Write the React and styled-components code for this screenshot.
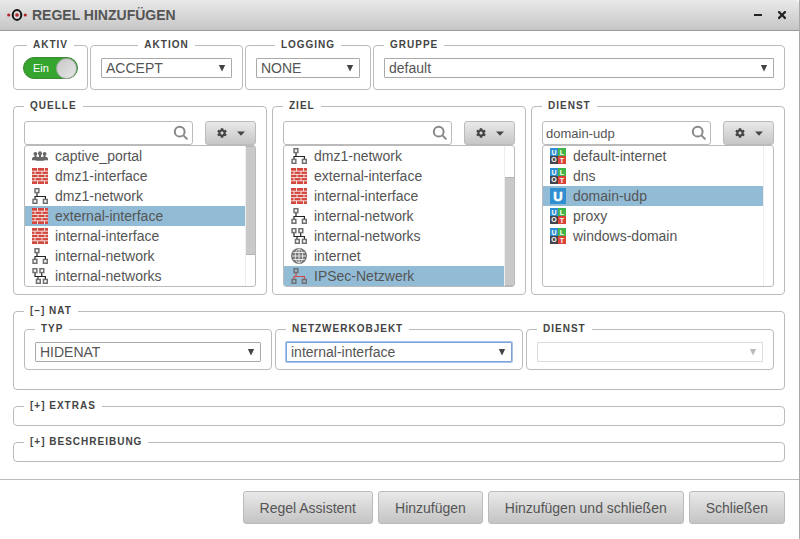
import React, { useState } from "react";
import styled, { createGlobalStyle, css } from "styled-components";
import { FaCog, FaTimes } from "react-icons/fa";

// Data of the three object lists
const sources = [
  { name: "captive_portal", icon: "users" },
  { name: "dmz1-interface", icon: "wall" },
  { name: "dmz1-network", icon: "network" },
  { name: "external-interface", icon: "wall" },
  { name: "internal-interface", icon: "wall" },
  { name: "internal-network", icon: "network" },
  { name: "internal-networks", icon: "networks" },
];

const targets = [
  { name: "dmz1-network", icon: "network" },
  { name: "external-interface", icon: "wall" },
  { name: "internal-interface", icon: "wall" },
  { name: "internal-network", icon: "network" },
  { name: "internal-networks", icon: "networks" },
  { name: "internet", icon: "globe" },
  { name: "IPSec-Netzwerk", icon: "vpn" },
];

const services = [
  { name: "default-internet", icon: "group" },
  { name: "dns", icon: "group" },
  { name: "domain-udp", icon: "udp" },
  { name: "proxy", icon: "group" },
  { name: "windows-domain", icon: "group" },
];

export default function App() {
  return (
    <>
      <GlobalStyle />
      <Window>
        <Header>
          <Logo />
          <Title>REGEL HINZUFÜGEN</Title>
          <WindowButton aria-label="Minimieren">
            <Dash />
          </WindowButton>
          <WindowButton aria-label="Fenster schließen">
            <FaTimes size={12} />
          </WindowButton>
        </Header>

        <Body>
          <SettingsRow>
            <Fieldset $pad="6px 9px">
              <Legend $center>AKTIV</Legend>
              <Switch>
                <input type="checkbox" defaultChecked aria-label="Aktiv" />
                <span>Ein</span>
                <Knob />
              </Switch>
            </Fieldset>
            <Fieldset>
              <Legend $center>AKTION</Legend>
              <Select label="Aktion" value="ACCEPT" />
            </Fieldset>
            <Fieldset>
              <Legend $center>LOGGING</Legend>
              <Select label="Logging" value="NONE" />
            </Fieldset>
            <Fieldset>
              <Legend>GRUPPE</Legend>
              <Select label="Gruppe" value="default" />
            </Fieldset>
          </SettingsRow>

          <Columns $gap={5}>
            <ObjectPicker
              title="QUELLE"
              items={sources}
              initial="external-interface"
              thumb="start"
            />
            <ObjectPicker
              title="ZIEL"
              items={targets}
              initial="IPSec-Netzwerk"
              thumb="end"
            />
            <ObjectPicker
              title="DIENST"
              items={services}
              initial="domain-udp"
              query="domain-udp"
            />
          </Columns>

          <Fieldset $pad="6px 10px 19px">
            <Legend>
              <LegendButton>[–] NAT</LegendButton>
            </Legend>
            <Columns $gap={3}>
              <Fieldset $pad="7px 10px">
                <Legend>TYP</Legend>
                <Select label="Typ" value="HIDENAT" />
              </Fieldset>
              <Fieldset $pad="7px 10px">
                <Legend>NETZWERKOBJEKT</Legend>
                <Select
                  label="Netzwerkobjekt"
                  value="internal-interface"
                  active
                />
              </Fieldset>
              <Fieldset $pad="7px 10px">
                <Legend>DIENST</Legend>
                <Select label="NAT Dienst" value="" disabled />
              </Fieldset>
            </Columns>
          </Fieldset>

          <Fieldset $pad="13px 10px 0">
            <Legend>
              <LegendButton>[+] EXTRAS</LegendButton>
            </Legend>
          </Fieldset>

          <Fieldset $pad="13px 10px 0">
            <Legend>
              <LegendButton>[+] BESCHREIBUNG</LegendButton>
            </Legend>
          </Fieldset>
        </Body>

        <Footer>
          <Button>Regel Assistent</Button>
          <Button>Hinzufügen</Button>
          <Button>Hinzufügen und schließen</Button>
          <Button>Schließen</Button>
        </Footer>
      </Window>
    </>
  );
}

// Drop-down with its own arrow
function Select({ label, value, active, disabled }) {
  return (
    <SelectBox $disabled={disabled}>
      <SelectField
        aria-label={label}
        defaultValue={value}
        disabled={disabled}
        $active={active}
      >
        <option value={value}>{value}</option>
      </SelectField>
      <svg width="8" height="8" viewBox="0 0 8 8">
        <path d="M0.8 1h6.4L4 7.5z" fill="currentColor" />
      </svg>
    </SelectBox>
  );
}

// Search box, settings button and list of objects
function ObjectPicker({ title, items, initial, query = "", thumb }) {
  const [selected, setSelected] = useState(initial);

  return (
    <Fieldset $pad="9px 10px 7px">
      <Legend>{title}</Legend>
      <Tools>
        <SearchBox>
          <input type="text" aria-label={title} defaultValue={query} />
          <svg width="16" height="16" viewBox="0 0 16 16">
            <circle cx="6.7" cy="6.7" r="4.9" />
            <path d="M10.4 10.4l4 4" />
          </svg>
        </SearchBox>
        <GearButton aria-label="Optionen">
          <FaCog size={10} />
          <svg width="8" height="5" viewBox="0 0 8 5">
            <path d="M0 0.5h8L4 4.7z" fill="currentColor" />
          </svg>
        </GearButton>
      </Tools>
      <ListBox>
        <List role="listbox" aria-label={title}>
          {items.map(({ name, icon }) => (
            <Item
              key={name}
              role="option"
              aria-selected={name === selected}
              $selected={name === selected}
              onClick={() => setSelected(name)}
            >
              <ItemIcon type={icon} />
              {name}
            </Item>
          ))}
        </List>
        <Track $thumb={thumb}>{thumb && <Thumb />}</Track>
      </ListBox>
    </Fieldset>
  );
}

function Logo() {
  return (
    <svg width="20" height="16" viewBox="0 0 20 16">
      <circle cx="1.7" cy="8" r="1.6" fill="#b3242a" />
      <circle cx="18.3" cy="8" r="1.6" fill="#b3242a" />
      <ellipse
        cx="10"
        cy="8"
        rx="4.3"
        ry="4.9"
        fill="none"
        stroke="#111"
        strokeWidth="2"
      />
      <circle cx="10" cy="8" r="1.8" fill="#b3242a" />
    </svg>
  );
}

// Small square node of the network icons
function Node({ x, y }) {
  return (
    <rect
      x={x + 0.75}
      y={y + 0.75}
      width="3.8"
      height="3.8"
      fill="none"
      stroke="#707070"
      strokeWidth="1.5"
    />
  );
}

function ItemIcon({ type }) {
  return (
    <svg width="16" height="16" viewBox="0 0 16 16" aria-hidden="true">
      {icons[type]}
    </svg>
  );
}

const network = (color) => (
  <>
    <path
      d="M5 5v3.5M3 11V8.5h10.4V11"
      fill="none"
      stroke={color}
      strokeWidth="1.2"
    />
    <Node x={2.3} y={0} />
    <Node x={0.3} y={10.7} />
    <Node x={10.7} y={10.7} />
  </>
);

const icons = {
  users: (
    <g fill="#666">
      <circle cx="3.4" cy="5.8" r="1.9" />
      <circle cx="12.6" cy="5.8" r="1.9" />
      <path d="M2.6 7h1.6v1.3l1.5.7v3.2H0v-1.500C0 9.500.9 9 2.600 8.400z" />
      <path d="M13.400 7h-1.600v1.300l-1.500.7v3.200H16v-1.500c0-1.200-.9-1.700-2.600-2.300z" />
      <ellipse cx="8" cy="5.6" rx="1.9" ry="2.4" />
      <path d="M7 7h2v1.700c1.900.6 2.900 1.200 2.900 2.500v1.500H4.100v-1.500c0-1.300 1-1.900 2.900-2.500z" />
    </g>
  ),
  wall: (
    <>
      <rect width="16" height="16" fill="#d0483e" />
      <path
        d="M0 3.2h16M0 6.4h16M0 9.6h16M0 12.8h16M5.5 0v3.2M12.5 0v3.2M3 3.2v3.2M10 3.2v3.2M6 6.4v3.2M13 6.4v3.2M3 9.6v3.2M10 9.6v3.2M5.5 12.8V16M12.5 12.8V16"
        stroke="#fff"
        strokeWidth="0.8"
      />
    </>
  ),
  network: network("#222"),
  vpn: network("#cf4a4a"),
  networks: (
    <>
      <path
        d="M3 5v3.5h10.4V11M9.7 5v3.5M6 8.5V11"
        fill="none"
        stroke="#222"
        strokeWidth="1.2"
      />
      <Node x={0.3} y={0} />
      <Node x={7.2} y={0} />
      <Node x={3.7} y={10.7} />
      <Node x={10.7} y={10.7} />
    </>
  ),
  globe: (
    <>
      <circle cx="8" cy="8" r="8" fill="#777" />
      <g fill="none" stroke="#eee" strokeWidth="0.9">
        <path d="M8 1v14M1 8h14M2.2 4.5h11.6M2.2 11.5h11.6" />
        <ellipse cx="8" cy="8" rx="3.8" ry="6.9" />
      </g>
    </>
  ),
  group: (
    <>
      <rect width="8" height="8" fill="#2f8fd0" />
      <rect x="8" width="8" height="8" fill="#3fb549" />
      <rect y="8" width="8" height="8" fill="#44444a" />
      <rect x="8" y="8" width="8" height="8" fill="#dd4237" />
      <g
        fill="#fff"
        fontFamily="Liberation Sans, sans-serif"
        fontSize="7"
        fontWeight="bold"
        textAnchor="middle"
      >
        <text x="4" y="6.5">U</text>
        <text x="12" y="6.5">L</text>
        <text x="4" y="14.2">O</text>
        <text x="12" y="14.5">T</text>
      </g>
    </>
  ),
  udp: (
    <>
      <rect width="16" height="16" fill="#2f8fd0" />
      <text
        x="8"
        y="12.6"
        fill="#fff"
        stroke="#fff"
        strokeWidth="0.5"
        fontFamily="Liberation Sans, sans-serif"
        fontSize="13"
        fontWeight="bold"
        textAnchor="middle"
      >
        U
      </text>
    </>
  ),
};

const GlobalStyle = createGlobalStyle`
  * {
    box-sizing: border-box;
  }

  body {
    margin: 0;
    background: #fff;
    color: #555;
    font-family: "Liberation Sans", Arial, sans-serif;
    font-size: 14px;
  }

  button, input, select {
    margin: 0;
    color: inherit;
    font: inherit;
  }
`;

const Window = styled.div`
  min-height: 100vh;
  border-right: 1px solid #aaa;
`;

// ======================================
// Title bar
const Header = styled.header`
  display: flex;
  align-items: center;
  height: 31px;
  padding: 0 11px 0 7px;
  background: linear-gradient(#e9e9e9, #c6c6c6);
  border-bottom: 1px solid #999;
  border-top-right-radius: 4px;
`;

const Title = styled.h1`
  flex: 1;
  margin: 0 0 0 5px;
  font-size: 14px;
  line-height: 16px;
`;

const WindowButton = styled.button`
  display: grid;
  place-items: center;
  width: 12px;
  height: 16px;
  margin-left: 12px;
  padding: 0;
  border: 0;
  background: none;
  color: #222;
`;

const Dash = styled.span`
  width: 8px;
  height: 2px;
  background: #222;
`;

// ======================================
// Groups of the form
const Body = styled.main`
  display: flex;
  flex-direction: column;
  gap: 10px;
  padding: 8px 14px 17px 13px;
`;

const SettingsRow = styled.div`
  display: grid;
  grid-template-columns: 75px 153px 126px 1fr;
  gap: 2px;
`;

const Columns = styled.div`
  display: grid;
  grid-template-columns: repeat(3, 1fr);
  gap: ${({ $gap }) => $gap}px;
`;

const Fieldset = styled.fieldset`
  min-width: 0;
  margin: 0;
  padding: ${({ $pad }) => $pad || "7px 10px 11px"};
  border: 1px solid #bbb;
  border-radius: 4px;
`;

const Legend = styled.legend`
  padding: 0 6px;
  color: #444;
  font-size: 10px;
  font-weight: bold;
  line-height: 12px;
  letter-spacing: 1px;

  ${({ $center }) =>
    $center &&
    css`
      margin: 0 auto;
    `}
`;

const LegendButton = styled.button`
  display: block;
  padding: 0;
  border: 0;
  background: none;
  letter-spacing: inherit;
`;

// ======================================
// Controls
const Switch = styled.label`
  display: flex;
  align-items: center;
  justify-content: space-between;
  height: 22px;
  padding-left: 9px;
  border: 1px solid #3c8a35;
  border-radius: 11px;
  background: #35a52f;
  color: #fff;
  font-size: 11px;

  input {
    position: absolute;
    opacity: 0;
  }
`;

const Knob = styled.i`
  width: 21px;
  height: 21px;
  border: 1px solid #aaa;
  border-radius: 50%;
  background: linear-gradient(135deg, #c8c8c8, #e6e6e6);
`;

const SelectBox = styled.div`
  display: grid;
  align-items: center;
  color: ${({ $disabled }) => ($disabled ? "#bbb" : "#444")};

  & > * {
    grid-area: 1 / 1;
  }

  & > svg {
    justify-self: end;
    margin-right: 6px;
    pointer-events: none;
  }
`;

const SelectField = styled.select`
  appearance: none;
  width: 100%;
  height: 20px;
  padding: 0 20px 0 4px;
  border: 1px solid #aaa;
  border-radius: 1px;
  background: #fff;
  color: #555;
  outline: none;

  &:disabled {
    border-color: #ddd;
    opacity: 1;
  }

  ${({ $active }) =>
    $active &&
    css`
      border-color: #7ba3d8;
      box-shadow: 0 0 0 1px #a9c4e6;
    `}
`;

const Tools = styled.div`
  display: flex;
  gap: 12px;
`;

const SearchBox = styled.div`
  flex: 1;
  display: flex;
  align-items: center;
  min-width: 0;
  height: 24px;
  padding: 0 3px;
  border: 1px solid #bbb;
  border-radius: 3px;

  input {
    flex: 1;
    min-width: 0;
    padding: 0;
    border: 0;
    background: none;
    font-size: 13px;
    outline: none;
  }

  svg {
    fill: none;
    stroke: #888;
    stroke-width: 2;
  }
`;

const GearButton = styled.button`
  display: flex;
  align-items: center;
  justify-content: center;
  gap: 10px;
  width: 51px;
  height: 24px;
  padding: 0;
  border: 1px solid #bbb;
  border-radius: 3px;
  background: linear-gradient(#e9e9e9, #c6c6c6);
  color: #444;
`;

const ListBox = styled.div`
  display: flex;
  height: 142px;
  border: 1px solid #bbb;
  border-radius: 3px;
  overflow: hidden;
`;

const List = styled.ul`
  flex: 1;
  min-width: 0;
  margin: 0;
  padding: 0;
  list-style: none;
`;

const Item = styled.li`
  display: flex;
  align-items: center;
  gap: 7px;
  height: 20px;
  padding-left: 7px;
  background: ${({ $selected }) => ($selected ? "#92bcd6" : "none")};
  cursor: default;
`;

const Track = styled.div`
  display: flex;
  flex-direction: column;
  justify-content: ${({ $thumb }) => $thumb || "start"};
  width: 10px;
  border-left: 1px solid #eee;
`;

const Thumb = styled.div`
  height: 78%;
  border: solid #b5b5b5;
  border-width: 1px 0;
  background: #c9c9c9;
`;

// ======================================
// Bottom bar
const Footer = styled.footer`
  display: flex;
  justify-content: flex-end;
  gap: 5px;
  padding: 11px 14px;
  border-top: 1px solid #bbb;
`;

const Button = styled.button`
  height: 33px;
  padding: 0 16px;
  border: 1px solid #bbb;
  border-radius: 3px;
  background: linear-gradient(#e9e9e9, #c4c4c4);
`;
